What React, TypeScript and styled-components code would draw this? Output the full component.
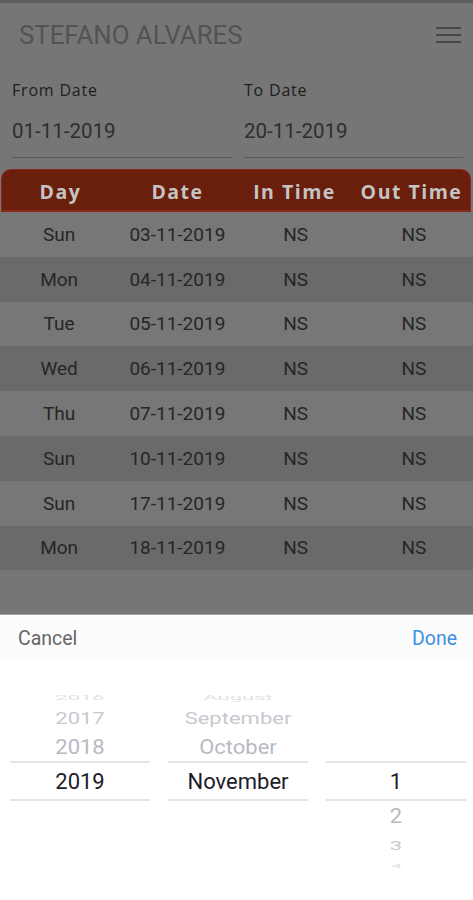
import React from "react";
import styled, { createGlobalStyle } from "styled-components";

const GlobalStyle = createGlobalStyle`
  html, body {
    margin: 0;
    padding: 0;
    background: #767676;
    font-family: Roboto, "Liberation Sans", sans-serif;
  }
`;

const Page = styled.div`
  width: 473px;
  min-height: 900px;
  background: #767676;
  border-top: 3px solid #5e5e5e;
  box-sizing: border-box;
`;

const Toolbar = styled.div`
  height: 63px;
  display: flex;
  align-items: center;
  justify-content: space-between;
  padding: 0 12px 0 19px;
`;

const Title = styled.div`
  font-size: 25.8px;
  color: #535353;
`;

const MenuIcon = styled.div`
  width: 25px;
  display: flex;
  flex-direction: column;
  gap: 5px;
  margin-top: 1px;

  span {
    display: block;
    height: 2px;
    background: #474747;
  }
`;

const DateRow = styled.div`
  display: grid;
  grid-template-columns: 220px 219px;
  gap: 12px;
  padding: 0 10px 0 12px;
`;

const Field = styled.div`
  display: flex;
  flex-direction: column;
  padding-top: 14px;
  padding-bottom: 13px;
  border-bottom: 1.5px solid #585858;
`;

const FieldLabel = styled.div`
  font-family: "Open Sans", "Liberation Sans", sans-serif;
  font-size: 16px;
  font-weight: 500;
  letter-spacing: 0.8px;
  line-height: 20px;
  color: #1e1e1e;
`;

const FieldValue = styled.div`
  margin-top: 18px;
  font-size: 20.5px;
  line-height: 26px;
  color: #2e2e2e;
`;

const Table = styled.div`
  margin-top: 11px;
`;

const HeaderRow = styled.div`
  display: grid;
  grid-template-columns: repeat(4, 1fr);
  align-items: center;
  height: 43px;
  padding-top: 2px;
  margin: 0 2px 0 1px;
  background: #6a1e0c;
  border: 1px solid #86291a;
  border-bottom-width: 2px;
  border-radius: 10px 10px 0 0;
  box-sizing: border-box;
`;

const HeaderCell = styled.div`
  text-align: center;
  font-family: "Open Sans", "Liberation Sans", sans-serif;
  font-weight: 700;
  font-size: 19.5px;
  letter-spacing: 1.5px;
  color: #c4c4c4;
`;

const Row = styled.div<{ $dark: boolean }>`
  display: grid;
  grid-template-columns: repeat(4, 1fr);
  align-items: center;
  height: 44.8px;
  background: ${(p) => (p.$dark ? "#6a6a6a" : "#777777")};
`;

const Cell = styled.div`
  text-align: center;
  font-size: 19px;
  color: #262626;
`;

const Sheet = styled.div`
  position: fixed;
  left: 0;
  right: 0;
  bottom: 0;
  height: 285px;
  background: #ffffff;
  border-top: 1px solid #a4a4a4;
`;

const SheetBar = styled.div`
  height: 47px;
  display: flex;
  align-items: center;
  justify-content: space-between;
  padding: 0 16px 0 18px;
  box-sizing: border-box;
  background: #fcfcfc;
`;

const BarButton = styled.div<{ $primary?: boolean }>`
  font-size: 19.5px;
  color: ${(p) => (p.$primary ? "#3d8fe3" : "#666666")};
`;

const Wheels = styled.div`
  display: grid;
  grid-template-columns: repeat(3, 140px);
  gap: 18px;
  padding: 27px 7px 0 10px;
`;

const Wheel = styled.div`
  display: flex;
  flex-direction: column;
`;

const WheelItem = styled.div<{
  $h: number;
  $color: string;
  $scale: number;
  $selected?: boolean;
}>`
  height: ${(p) => p.$h}px;
  display: flex;
  align-items: center;
  justify-content: center;
  font-size: 22px;
  color: ${(p) => p.$color};
  box-sizing: border-box;
  overflow: hidden;
  ${(p) =>
    p.$selected &&
    `border-top: 2px solid #e4e4e4; border-bottom: 2px solid #e4e4e4;`}

  span {
    display: inline-block;
    transform: scaleY(${(p) => p.$scale});
  }
`;

const rows = [
  ["Sun", "03-11-2019"],
  ["Mon", "04-11-2019"],
  ["Tue", "05-11-2019"],
  ["Wed", "06-11-2019"],
  ["Thu", "07-11-2019"],
  ["Sun", "10-11-2019"],
  ["Sun", "17-11-2019"],
  ["Mon", "18-11-2019"],
];

// wheel slot geometry: three above, the selected one, three below
const slots = [
  { h: 16, color: "#e2e2e6", scale: 0.35 },
  { h: 26, color: "#c8c8d0", scale: 0.72 },
  { h: 30, color: "#b9b9c3", scale: 0.95 },
  { h: 40, color: "#1c1c28", scale: 1, selected: true },
  { h: 30, color: "#b9b9c3", scale: 0.9 },
  { h: 28, color: "#c8c8d0", scale: 0.6 },
  { h: 14, color: "#e2e2e6", scale: 0.25 },
];

const wheels = [
  ["2016", "2017", "2018", "2019", "", "", ""],
  ["August", "September", "October", "November", "", "", ""],
  ["", "", "", "1", "2", "3", "4"],
];

const App = () => {
  return (
    <>
      <GlobalStyle />
      <Page>
        <Toolbar>
          <Title>STEFANO ALVARES</Title>
          <MenuIcon>
            <span />
            <span />
            <span />
          </MenuIcon>
        </Toolbar>
        <DateRow>
          <Field>
            <FieldLabel>From Date</FieldLabel>
            <FieldValue>01-11-2019</FieldValue>
          </Field>
          <Field>
            <FieldLabel>To Date</FieldLabel>
            <FieldValue>20-11-2019</FieldValue>
          </Field>
        </DateRow>
        <Table>
          <HeaderRow>
            <HeaderCell>Day</HeaderCell>
            <HeaderCell>Date</HeaderCell>
            <HeaderCell>In Time</HeaderCell>
            <HeaderCell>Out Time</HeaderCell>
          </HeaderRow>
          {rows.map(([day, date], i) => (
            <Row key={i} $dark={i % 2 === 1}>
              <Cell>{day}</Cell>
              <Cell>{date}</Cell>
              <Cell>NS</Cell>
              <Cell>NS</Cell>
            </Row>
          ))}
        </Table>
      </Page>
      <Sheet>
        <SheetBar>
          <BarButton>Cancel</BarButton>
          <BarButton $primary>Done</BarButton>
        </SheetBar>
        <Wheels>
          {wheels.map((items, w) => (
            <Wheel key={w}>
              {items.map((label, i) => (
                <WheelItem
                  key={i}
                  $h={slots[i].h}
                  $color={slots[i].color}
                  $scale={slots[i].scale}
                  $selected={slots[i].selected}
                >
                  <span>{label}</span>
                </WheelItem>
              ))}
            </Wheel>
          ))}
        </Wheels>
      </Sheet>
    </>
  );
};

export default App;
